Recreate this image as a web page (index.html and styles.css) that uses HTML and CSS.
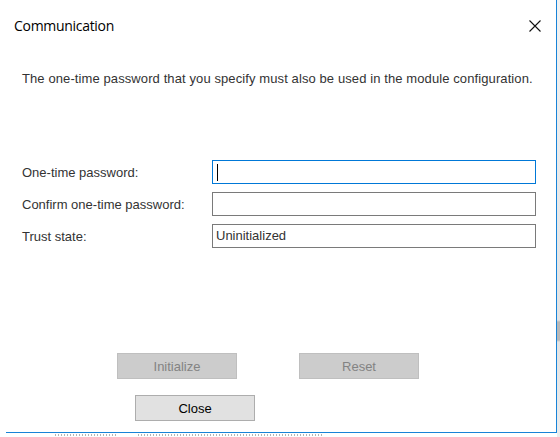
FILE: index.html
```html
<!DOCTYPE html>
<html>
<head>
<meta charset="utf-8">
<link rel="stylesheet" href="styles.css">
</head>
<body>
<div class="screen">
  <div class="dialog">
    <div class="titlebar">
      <span class="title">Communication</span>
      <svg class="close-x" width="12" height="12" viewBox="0 0 12 12">
        <path d="M0.5 0.5 L11.5 11.5 M11.5 0.5 L0.5 11.5" stroke="#111" stroke-width="1.1" fill="none"/>
      </svg>
    </div>
    <div class="content">
      <p class="desc">The one-time password that you specify must also be used in the module configuration.</p>
      <div class="form">
        <label class="lbl">One-time password:</label>
        <div class="field focused"><span class="caret"></span></div>
        <label class="lbl">Confirm one-time password:</label>
        <div class="field"></div>
        <label class="lbl">Trust state:</label>
        <div class="field">Uninitialized</div>
      </div>
      <div class="actions">
        <button class="btn disabled">Initialize</button>
        <button class="btn disabled">Reset</button>
      </div>
      <div class="actions close-row">
        <button class="btn">Close</button>
      </div>
    </div>
  </div>
  <div class="behind">
    <span class="bg-a"></span>
    <span class="bg-b"></span>
  </div>
  <div class="side"></div>
</div>
</body>
</html>
```
FILE: styles.css
```css
html, body {
  margin: 0;
  padding: 0;
  background: #ffffff;
}
.screen {
  position: relative;
  width: 560px;
  height: 437px;
  overflow: hidden;
  background: #ffffff;
}
.dialog {
  box-sizing: border-box;
  margin-left: 6px;
  width: 551px;
  height: 433px;
  background: #ffffff;
  border-right: 1px solid #1883d7;
  border-bottom: 1px solid #1883d7;
  display: flex;
  flex-direction: column;
  position: relative;
  z-index: 2;
}
.titlebar {
  display: flex;
  align-items: flex-start;
  justify-content: space-between;
  padding: 16px 15px 0 8px;
  height: 34px;
}
.title {
  font-family: "Open Sans", "Noto Sans", sans-serif;
  font-size: 14px;
  letter-spacing: -0.3px;
  line-height: 20px;
  color: #000;
}
.close-x {
  margin-top: 4px;
}
.content {
  padding-left: 16px;
  font-family: "Liberation Sans", Arial, sans-serif;
  font-size: 13px;
  color: #333333;
}
.desc {
  margin: 21px 0 0 0;
  line-height: 15px;
  letter-spacing: 0.1px;
}
.form {
  margin-top: 74px;
  display: grid;
  grid-template-columns: 190px 324px;
  grid-auto-rows: 24px;
  row-gap: 8px;
  align-items: center;
}
.lbl {
  color: #333333;
  line-height: 15px;
}
.field {
  box-sizing: border-box;
  height: 24px;
  border: 1px solid #7a7a7a;
  background: #fff;
  padding: 0 3px;
  line-height: 22px;
  display: flex;
  align-items: center;
  color: #333;
}
.field.focused {
  border-color: #0078d7;
}
.caret {
  display: block;
  width: 1px;
  height: 17px;
  background: #000;
  margin-left: 1px;
}
.actions {
  display: flex;
  gap: 62px;
  margin-top: 105px;
  padding-left: 95px;
}
.close-row {
  margin-top: 16px;
  padding-left: 113px;
}
.btn {
  box-sizing: border-box;
  width: 120px;
  height: 26px;
  margin: 0;
  padding: 0;
  font-family: "Liberation Sans", Arial, sans-serif;
  font-size: 13px;
  background: #e1e1e1;
  border: 1px solid #adadad;
  color: #000;
}
.btn.disabled {
  background: #cccccc;
  border-color: #bfbfbf;
  color: #838383;
}
.behind {
  position: absolute;
  left: 0;
  top: 433px;
  width: 560px;
  height: 4px;
  z-index: 1;
}
.bg-a, .bg-b {
  position: absolute;
  top: 1px;
  height: 2px;
  background: repeating-linear-gradient(90deg, #b5b5b5 0, #b5b5b5 1px, transparent 1px, transparent 3px);
}
.bg-a {
  left: 55px;
  width: 63px;
}
.bg-b {
  left: 138px;
  width: 184px;
}
.side {
  position: absolute;
  right: 0;
  top: 0;
  width: 3px;
  height: 437px;
  background: linear-gradient(#f2f2f2 0, #e3e3e3 320px, #b8b8b8 322px, #b8b8b8 340px, #e3e3e3 342px, #ececec 100%);
  z-index: 1;
}
```
